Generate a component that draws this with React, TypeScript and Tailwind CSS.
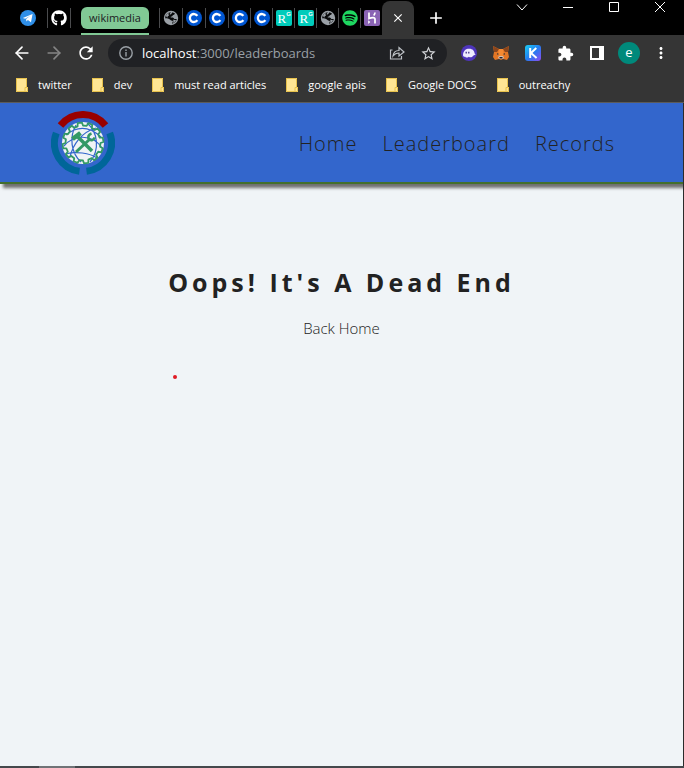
import React from "react";
import { ArrowLeft, ArrowRight } from "lucide-react";
import { FaGithub, FaSpotify } from "react-icons/fa";
import { MdExtension, MdRefresh, MdStarBorder, MdMoreVert, MdClose, MdAdd } from "react-icons/md";

function Telegram() {
  return (
    <svg viewBox="0 0 16 16" className="size-4">
      <circle cx="8" cy="8" r="8" fill="#2f8fe8" />
      <path d="M2.8 7.9 12.6 4 11 12.2 7.9 10 6.4 11.4 6.1 9.1 10.3 5.8 5.2 8.8z" fill="#fff" />
    </svg>
  );
}

function Globe() {
  return (
    <svg viewBox="0 0 16 16" className="size-4">
      <circle cx="8" cy="8" r="7.2" fill="#9aa0a6" />
      <path
        d="M9.500 2.200 12 3.500c-.4 1.500-1.600 1.200-2.400 1.900-.3 1.200-1.700.9-2.200 1.600.6.900 2.300.2 3.200.9.600.9.900 1.300 3.200 1.200-.6 2.400-2.300 4-4.800 4.600.2-1.300 1.200-1.700.8-2.600-.9-.5-2.300-.6-2.900-1.600C6 8.500 4.200 8.600 2.200 8.300 2.300 5 4.500 2.400 8 2.200c-1 .9-1.700 1.500-1.100 2.300.9.100 1.600-.9 2.600-2.300z"
        fill="#08090a"
      />
      <path d="M10 9.800c1.100-.4 1.700 0 3 .2-.5 1.400-1.600 2.500-2.900 3 .1-1 .7-2-.1-3.200zM3 5.500c.7-1.300 1.700-2.200 3-2.700-.7 1-.7 1.800.1 2.500-.5.700-1.700.9-1.600 2.100-.8.100-1.300-.9-1.500-1.900z" fill="#9aa0a6" />
    </svg>
  );
}

function Coursera() {
  return (
    <svg viewBox="0 0 16 16" className="size-4">
      <circle cx="8" cy="8" r="8" fill="#0056d2" />
      <path d="M11.300 5.900a4 4 0 1 0 0 4.200" fill="none" stroke="#fff" strokeWidth="2.300" />
    </svg>
  );
}

function ResearchGate() {
  return (
    <span className="flex size-4 items-start rounded-[2px] bg-[#00ccbb] pl-[2px] text-white">
      <span className="pt-[2px] font-['Liberation_Serif',serif] text-[13px] leading-[14px]">R</span>
      <span className="pt-px font-['Liberation_Sans',sans-serif] text-[6px] font-bold leading-[7px]">G</span>
    </span>
  );
}

function Heroku() {
  return (
    <svg viewBox="0 0 16 16" className="size-4">
      <rect width="16" height="16" rx="2" fill="#8a63b4" />
      <path d="M5 2.500v6C8 7.200 11 7 11 9.200v4.300M11 2.500c0 1.300-.6 2.200-1.300 3" fill="none" stroke="#fff" strokeWidth="1.700" />
      <path d="M4.200 10.300v3.600L6.300 12z" fill="#fff" />
    </svg>
  );
}

function Phantom() {
  return (
    <svg viewBox="0 0 16 16" className="size-4">
      <circle cx="8" cy="8" r="8" fill="#4e35bb" />
      <path d="M2 10C2.300 5.500 5 3.600 8.200 3.700c3.600 0 5.300 2.300 5.400 4.900l1 .8-2.100 1.100c-1.500 2-3.400 2.200-4.600 1.300-1.800 1.300-3.200.9-3.600-.1C3.300 12.200 2 11.500 2 10z" fill="#eeebff" />
      <path d="M5.200 6.700v1.900M7.800 6.700v1.900" stroke="#342381" strokeWidth="1.200" />
    </svg>
  );
}

function Fox() {
  return (
    <svg viewBox="0 0 16 16" className="size-4">
      <path d="M0 1 6 4h4l6-3-1 6 1 5-2 3-4-1-2 1-2-1-4 1-2-3 1-5z" fill="#e27625" />
      <path d="M0 1 6 4 4 7H1zM16 1 10 4l2 3h3z" fill="#8a451c" />
      <path d="M6 4h4l1 6-3 2-3-2z" fill="#f58a32" />
      <path d="m4 8 2 1-1.500 1zM12 8l-2 1 1.500 1z" fill="#31313a" />
      <path d="m5 12 1.500-1h3l1.500 1-1 2H6z" fill="#d5bfb2" />
      <path d="M6.500 12h3v1.500h-3z" fill="#242329" />
    </svg>
  );
}

function Keplr() {
  return (
    <svg viewBox="0 0 16 16" className="size-4">
      <defs>
        <linearGradient id="wallet" x2="1" y2="1">
          <stop stopColor="#1bd0f4" />
          <stop offset=".5" stopColor="#237df0" />
          <stop offset="1" stopColor="#914cf0" />
        </linearGradient>
      </defs>
      <rect width="16" height="16" rx="3" fill="url(#wallet)" />
      <path d="M5.200 3v10M11.300 3 6 8l5.600 5" fill="none" stroke="#fff" strokeWidth="2" />
    </svg>
  );
}

function SidePanel() {
  return (
    <svg viewBox="0 0 14 14" className="size-[14px]">
      <path d="M0 0h14v14H0zM2 2v10h7V2z" fill="#fff" fillRule="evenodd" />
    </svg>
  );
}

function Share() {
  return (
    <svg viewBox="0 0 16 16" className="size-4" fill="none" stroke="#bdc1c6" strokeWidth="1.200">
      <path d="M3.500 5H1.500v9h11v-3M4 11c.4-3.500 2.500-5.500 6-5.500V2.500L15 7l-5 4V8C7.300 8 5.500 9 4 11z" />
    </svg>
  );
}

function Info() {
  return (
    <svg viewBox="0 0 14 14" className="size-[14px] shrink-0" fill="none" stroke="#9aa0a6" strokeWidth="1.400">
      <circle cx="7" cy="7" r="6.200" />
      <path d="M7 6v4.500M7 3.400v1.500" />
    </svg>
  );
}

function Folder() {
  return (
    <svg viewBox="0 0 12 14" className="h-[14px] w-3 shrink-0">
      <path d="M0 0h11v9h1v5H0z" fill="#ffe694" />
      <path d="M.5 0v13.500h11V9.500H9v4M.5.500h10v9" fill="none" stroke="#e8c24d" />
    </svg>
  );
}

/* Outline of the cog around the globe: each tooth steps between two radii. */
const cogPoints = Array.from({ length: 12 }, (_, tooth) =>
  [
    [0, 17.5],
    [12, 17.5],
    [15, 20.5],
    [27, 20.5],
  ].map(([offset, radius]) => {
    const angle = ((tooth * 30 + offset) * Math.PI) / 180;
    return `${(32 + radius * Math.cos(angle)).toFixed(2)},${(32 + radius * Math.sin(angle)).toFixed(2)}`;
  }),
)
  .flat()
  .join(" ");

function CommunityLogo() {
  return (
    <svg viewBox="0 0 64 64" className="size-16" role="img" aria-label="Wikimedia">
      <g fill="none" strokeWidth="7">
        <path d="M9.500 14.500A28.500 28.500 0 0 1 54.500 14.500" stroke="#990000" />
        <path d="M5.300 21.900A28.500 28.500 0 0 0 28.500 60.300" stroke="#006699" />
        <path d="M58.700 21.900A28.500 28.500 0 0 1 35.500 60.300" stroke="#006699" />
      </g>
      <circle cx="32" cy="32" r="21" fill="#f0f3f5" />
      <g fill="none" stroke="#3366cc" strokeWidth="1.200">
        <path d="M15 24C26 15 38 15 50 26M13 35C22 24 41 22 51 37M15 43C24 40 39 42 46 47M25 14C18 26 20 42 30 51M36 12C47 21 49 39 39 51M45 17C31 21 22 33 19 46" />
      </g>
      <polygon points={cogPoints} fill="none" stroke="#339966" strokeWidth="1.800" strokeLinejoin="round" />
      <g fill="none" stroke="#339966">
        <path d="m26 25 15 15" strokeWidth="3.500" />
        <path d="m21.500 28 8-6" strokeWidth="4.500" />
        <path d="M25 41 39 28" strokeWidth="3" />
        <path d="M40.500 22.500c-3 1-4 3.500-2.500 5.500s4.500 1.500 5.800-1.500" strokeWidth="2.600" />
      </g>
    </svg>
  );
}

const pinned: { label: string; icon: React.ReactNode; wide: boolean }[] = [
  { label: "New site", icon: <Globe />, wide: true },
  { label: "Course 1", icon: <Coursera />, wide: true },
  { label: "Course 2", icon: <Coursera />, wide: true },
  { label: "Course 3", icon: <Coursera />, wide: false },
  { label: "Course 4", icon: <Coursera />, wide: false },
  { label: "Research 1", icon: <ResearchGate />, wide: false },
  { label: "Research 2", icon: <ResearchGate />, wide: false },
  { label: "Site", icon: <Globe />, wide: false },
  { label: "Spotify", icon: <FaSpotify className="size-4 text-[#1ed760]" />, wide: false },
  { label: "Heroku", icon: <Heroku />, wide: false },
];

const bookmarks = ["twitter", "dev", "must read articles", "google apis", "Google DOCS", "outreachy"];

function WindowGlyph({ d }: { d: string }) {
  return (
    <svg viewBox="0 0 12 12" className="size-3" fill="none" stroke="#fff" strokeWidth="1">
      <path d={d} />
    </svg>
  );
}

function TabStrip() {
  return (
    <div className="flex h-[35px] bg-black">
      <div className="flex items-center pt-px pl-5">
        <button aria-label="Telegram" className="w-[27px]"><Telegram /></button>
        <button aria-label="GitHub" className="flex h-5 w-6 items-center justify-center border-x border-[#4a4b4d]">
          <FaGithub className="size-4 text-white" />
        </button>
      </div>
      <div className="ml-[10px] flex w-[68px] flex-col justify-between pt-[7px]">
        <button className="h-[22px] rounded-md bg-[#81c995] text-[11px] leading-5 text-[#202124]">wikimedia</button>
        <div className="h-[2px] bg-[#81c995]" />
      </div>
      <div className="ml-[10px] flex items-center pt-px">
        {pinned.map((tab) => (
          <button
            key={tab.label}
            aria-label={tab.label}
            className={`flex h-5 items-center justify-center border-l border-[#4a4b4d] ${tab.wide ? "w-[23px]" : "w-[22px]"}`}
          >
            {tab.icon}
          </button>
        ))}
      </div>
      <div className="mt-px flex w-8 items-center justify-center rounded-t-lg bg-[#353535]">
        <button aria-label="Close tab"><MdClose className="size-[14px] text-white" /></button>
      </div>
      <button aria-label="New tab" className="ml-3 pt-px"><MdAdd className="size-5 text-white" /></button>
      <div className="ml-auto flex h-[14px] items-center gap-[34px] pr-[18px]">
        <button aria-label="Search tabs"><WindowGlyph d="M1 3.500 6 9l5-5.500" /></button>
        <button aria-label="Minimize"><WindowGlyph d="M1 6.500h10" /></button>
        <button aria-label="Maximize"><WindowGlyph d="M1.500 1.500h9v9h-9z" /></button>
        <button aria-label="Close"><WindowGlyph d="m1 1 10 10M11 1 1 11" /></button>
      </div>
    </div>
  );
}

function ToolButton({ label, children }: { label: string; children: React.ReactNode }) {
  return (
    <button aria-label={label} className="flex w-8 items-center justify-center text-white">
      {children}
    </button>
  );
}

function Toolbar() {
  return (
    <div className="flex h-[35px] items-center bg-[#353535] pt-px pr-[7px] pl-[6px]">
      <ToolButton label="Back"><ArrowLeft className="size-5" /></ToolButton>
      <ToolButton label="Forward"><ArrowRight className="size-5 text-[#858585]" /></ToolButton>
      <ToolButton label="Reload"><MdRefresh className="size-5" /></ToolButton>
      <div className="mx-[6px] flex h-7 flex-1 items-center rounded-full bg-[#202124] pr-[10px] pl-[11px]">
        <Info />
        <div className="ml-[9px] flex-1 text-[13px] leading-5 text-[#9aa0a6]">
          <span className="text-white">localhost</span>:3000/leaderboards
        </div>
        <button aria-label="Share"><Share /></button>
        <button aria-label="Bookmark" className="ml-[15px]"><MdStarBorder className="size-[17px] text-[#d2d4d7]" /></button>
      </div>
      <ToolButton label="Phantom"><Phantom /></ToolButton>
      <ToolButton label="MetaMask"><Fox /></ToolButton>
      <ToolButton label="Keplr"><Keplr /></ToolButton>
      <ToolButton label="Extensions"><MdExtension className="size-[17px]" /></ToolButton>
      <ToolButton label="Side panel"><SidePanel /></ToolButton>
      <button aria-label="Profile" className="flex w-8 justify-center">
        <span className="size-[22px] rounded-full bg-[#00897b] text-center text-[13px] leading-5 text-white">e</span>
      </button>
      <ToolButton label="Menu"><MdMoreVert className="size-[18px]" /></ToolButton>
    </div>
  );
}

export default function App() {
  return (
    <div className="flex min-h-screen flex-col bg-[#f0f4f7] font-['Open_Sans','Noto_Sans',sans-serif]">
      <TabStrip />
      <Toolbar />
      <nav aria-label="Bookmarks" className="flex h-[33px] items-center gap-5 border-b border-[#5b5b5b] bg-[#353535] pb-[2px] pl-4 text-[11px] text-white">
        {bookmarks.map((name) => (
          <a key={name} href="#" className="flex items-center gap-[10px] whitespace-nowrap">
            <Folder />
            {name}
          </a>
        ))}
      </nav>
      <div className="flex flex-1 flex-col overflow-hidden border-r border-[#2b2b2b]">
        <header className="flex h-[81px] items-center justify-between border-b-2 border-[#446f2c] bg-[#3366cc] pr-[68px] pl-[51px] shadow-[3px_4px_3px_#707070]">
          <a href="#"><CommunityLogo /></a>
          <nav className="flex gap-[25px] pt-[2px] text-xl font-light tracking-[1px] text-[#222222]">
            <a href="#">Home</a>
            <a href="#">Leaderboard</a>
            <a href="#">Records</a>
          </nav>
        </header>
        <main className="flex flex-1 flex-col items-center pt-20 text-[#222222]">
          <h1 className="text-[25px] leading-9 font-bold tracking-[4px]">Oops! It's A Dead End</h1>
          <a href="#" className="mt-4 text-[15px] leading-6 font-light">Back Home</a>
          <span className="mt-[35px] mr-[333px] size-1 rounded-full bg-[#e01b24]" />
        </main>
      </div>
      <footer className="h-[2px] bg-[#45484c] pl-[39px]">
        <div className="h-full w-9 bg-[#707377]" />
      </footer>
    </div>
  );
}
